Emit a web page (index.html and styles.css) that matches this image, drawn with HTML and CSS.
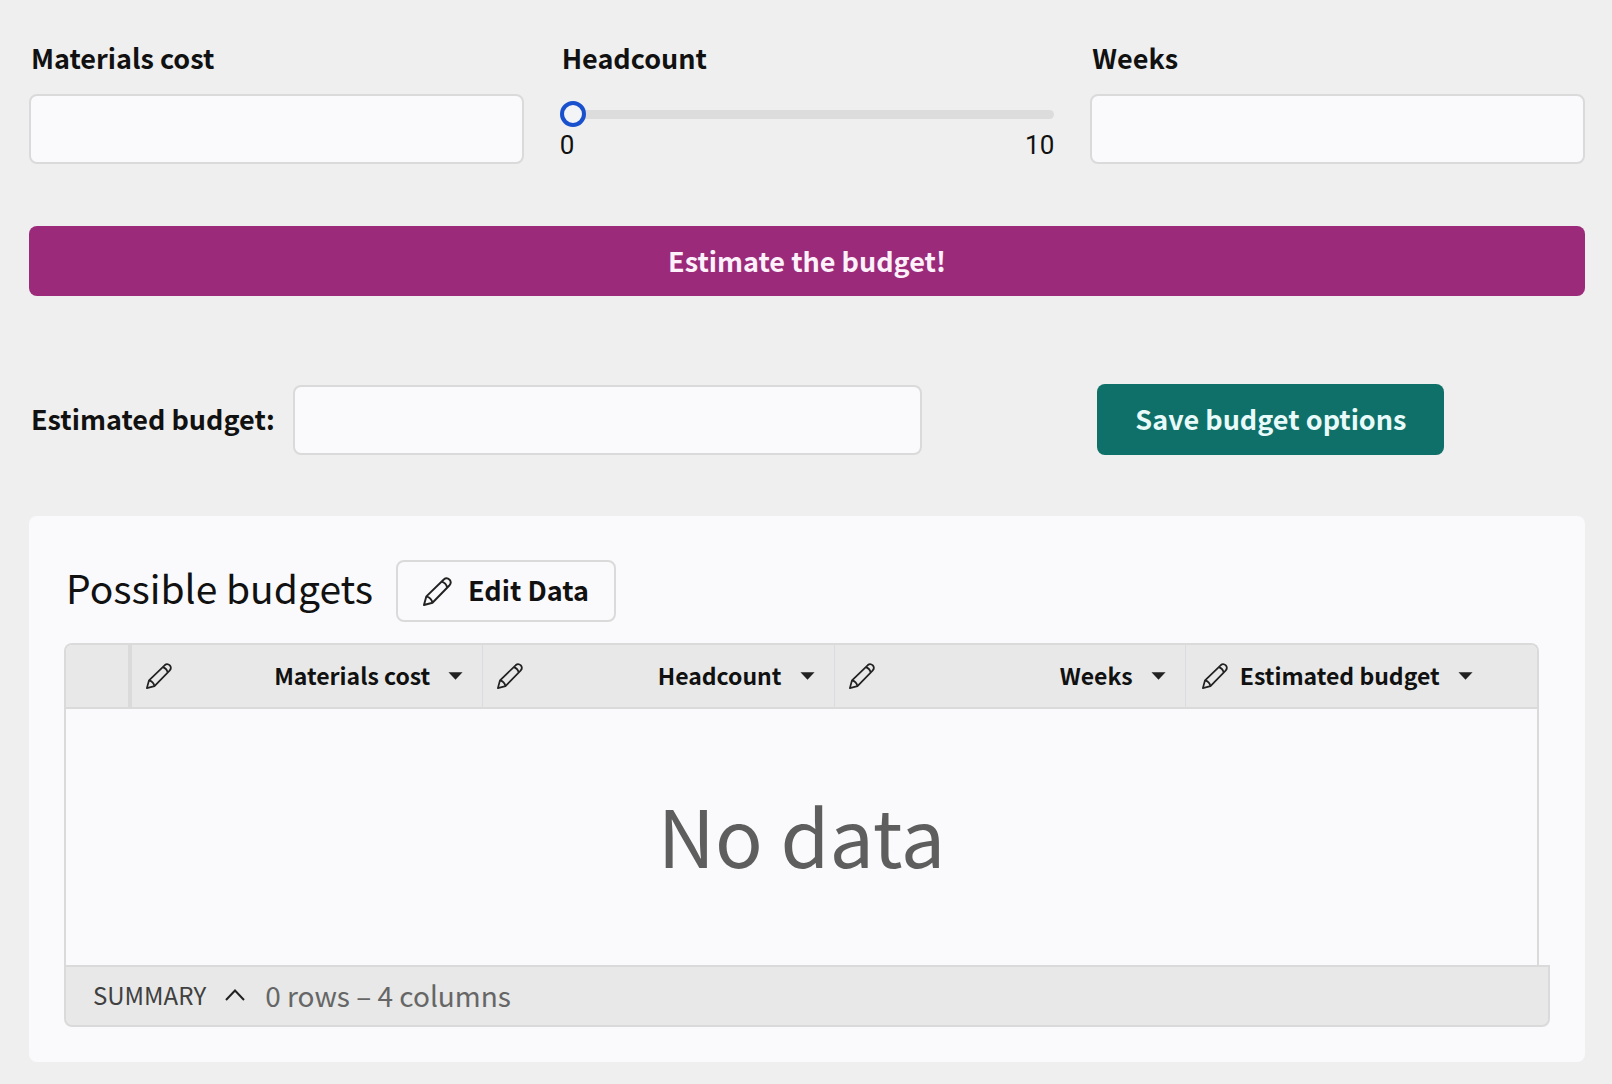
FILE: index.html
```
<!DOCTYPE html>
<html lang="en">

<head>
    <meta charset="UTF-8">
    <meta name="viewport" content="width=device-width, initial-scale=1.0">
    <title>Budget estimator</title>
    <link rel="stylesheet" href="styles.css">
</head>

<body>
    <!-- shared icons -->
    <svg class="sprite" aria-hidden="true">
        <symbol id="pencil" viewBox="0 0 30 30">
            <path d="M1 29 L3.5 20 L21.5 2.6 Q24.5 0 27.5 2.8 Q30 5.8 27.2 8.8 L9.8 26.6 Z M3.5 20 Q8.5 21.3 9.8 26.6 M19.2 4.8 Q23.8 6 25 11" />
        </symbol>
        <symbol id="caret" viewBox="0 0 16 8">
            <path d="M0.5 0 H15.5 L8 8 Z" />
        </symbol>
    </svg>

    <form class="inputs">
        <div class="field">
            <label for="materials">Materials cost</label>
            <input type="text" id="materials">
        </div>
        <div class="field">
            <label for="headcount">Headcount</label>
            <input type="range" id="headcount" min="0" max="10" value="0">
            <div class="scale">
                <span>0</span>
                <span>10</span>
            </div>
        </div>
        <div class="field">
            <label for="weeks">Weeks</label>
            <input type="text" id="weeks">
        </div>
        <button type="button" class="estimate">Estimate the budget!</button>
        <div class="result">
            <label for="estimated">Estimated budget:</label>
            <input type="text" id="estimated">
        </div>
        <button type="button" class="save">Save budget options</button>
    </form>

    <section class="card">
        <div class="cardHeader">
            <h2>Possible budgets</h2>
            <button type="button" class="edit">
                <svg class="pencil"><use href="#pencil" /></svg>
                <span>Edit Data</span>
            </button>
        </div>
        <div class="tableContainer">
            <table>
                <thead>
                    <tr>
                        <th class="rowNumber"></th>
                        <th>
                            <div class="column">
                                <svg class="pencil"><use href="#pencil" /></svg>
                                <span>Materials cost</span>
                                <button type="button" aria-label="Materials cost menu"><svg class="caret"><use href="#caret" /></svg></button>
                            </div>
                        </th>
                        <th>
                            <div class="column">
                                <svg class="pencil"><use href="#pencil" /></svg>
                                <span>Headcount</span>
                                <button type="button" aria-label="Headcount menu"><svg class="caret"><use href="#caret" /></svg></button>
                            </div>
                        </th>
                        <th>
                            <div class="column">
                                <svg class="pencil"><use href="#pencil" /></svg>
                                <span>Weeks</span>
                                <button type="button" aria-label="Weeks menu"><svg class="caret"><use href="#caret" /></svg></button>
                            </div>
                        </th>
                        <th>
                            <div class="column left">
                                <svg class="pencil"><use href="#pencil" /></svg>
                                <span>Estimated budget</span>
                                <button type="button" aria-label="Estimated budget menu"><svg class="caret"><use href="#caret" /></svg></button>
                            </div>
                        </th>
                    </tr>
                </thead>
                <tbody>
                    <tr>
                        <td colspan="5">No data</td>
                    </tr>
                </tbody>
            </table>
        </div>
        <div class="summary">
            <button type="button">
                SUMMARY
                <svg class="chevron" viewBox="0 0 20 12"><path d="M1 11 L10 1.5 L19 11" /></svg>
            </button>
            <span>0 rows – 4 columns</span>
        </div>
    </section>
</body>

</html>
```
FILE: styles.css
```
* {
    box-sizing: border-box;
}

body {
    margin: 0px;
    padding: 37px 27px 22px 29px;
    background-color: #eeefee;
    color: #111111;
    font-family: "Noto Sans CJK SC", "Noto Sans", sans-serif;
    font-size: 27px;
    line-height: 42px;
}

button {
    font: inherit;
    color: inherit;
    padding: 0px;
    border: none;
    background: none;
    cursor: pointer;
}

.sprite {
    display: none;
}

.pencil {
    width: 26px;
    height: 26px;
    fill: none;
    stroke: #222222;
    stroke-width: 2;
    stroke-linejoin: round;
    flex-shrink: 0;
}

.inputs {
    display: grid;
    grid-template-columns: repeat(3, 1fr);
    column-gap: 36px;
    font-weight: 700;

    label {
        padding-left: 2px;
    }

    input[type="text"] {
        width: 100%;
        height: 70px;
        padding: 0px 20px;
        border: 2px solid #dadada;
        border-radius: 8px;
        background-color: #fafafc;
        font: inherit;
    }

    .field {
        display: flex;
        flex-direction: column;

        input[type="text"] {
            margin-top: 15px;
        }
    }

    input[type="range"] {
        appearance: none;
        width: 100%;
        height: 26px;
        margin: 22px 0px 0px;
        background: none;
    }

    input[type="range"]::-webkit-slider-runnable-track {
        height: 9px;
        border-radius: 5px;
        background-color: #dcdcdc;
    }

    input[type="range"]::-webkit-slider-thumb {
        appearance: none;
        width: 26px;
        height: 26px;
        margin-top: -9px;
        border: 4px solid #1950cd;
        border-radius: 50%;
        background-color: #f3f4f5;
    }

    .scale {
        display: flex;
        justify-content: space-between;
        font-family: Roboto, sans-serif;
        font-size: 26px;
        font-weight: 400;
        line-height: 36px;
    }

    .estimate {
        grid-column: 1 / -1;
        height: 70px;
        margin-top: 62px;
        border-radius: 8px;
        background-color: #9c2a7a;
        color: #fdf2fb;
    }

    .result {
        grid-column: span 2;
        display: flex;
        align-items: center;
        gap: 18px;
        margin-top: 88px;
        padding-right: 132px;

        label {
            flex-shrink: 0;
            padding-bottom: 2px;
        }
    }

    .save {
        justify-self: start;
        height: 71px;
        margin-top: 88px;
        margin-left: 7px;
        padding: 0px 38px 2px;
        border-radius: 8px;
        background-color: #0f7069;
        color: #e9fafa;
    }
}

.card {
    margin-top: 61px;
    padding: 44px 35px 35px;
    border-radius: 8px;
    background-color: #fafafc;
}

.cardHeader {
    display: flex;
    align-items: center;
    gap: 23px;
    padding-left: 2px;

    h2 {
        margin: 0px;
        padding-bottom: 8px;
        font-size: 39px;
        font-weight: 400;
    }

    .edit {
        display: flex;
        align-items: center;
        gap: 16px;
        height: 62px;
        padding: 0px 25px;
        border: 2px solid #dadada;
        border-radius: 8px;
        font-weight: 700;

        span {
            padding-bottom: 2px;
        }
    }

    .pencil {
        width: 29px;
        height: 29px;
    }
}

.tableContainer {
    margin-top: 21px;
    margin-right: 11px;
    border: 2px solid #dadada;
    border-bottom: none;
    border-radius: 8px 8px 0px 0px;
    overflow: hidden;
}

table {
    width: 100%;
    border-collapse: separate;
    border-spacing: 0px;
    table-layout: fixed;

    th {
        height: 64px;
        padding: 0px;
        border-right: 1px solid #dcdce0;
        border-bottom: 2px solid #dadada;
        background-color: #e7e8e7;
        font-size: 23px;
        font-weight: 700;
    }

    th.rowNumber {
        width: 66px;
        border-right: 4px solid #dadada;
    }

    th:last-child {
        border-right: none;
    }

    td {
        height: 256px;
        padding: 0px 0px 6px;
        color: #5e5e5e;
        font-size: 79px;
        text-align: center;
    }
}

.column {
    display: flex;
    align-items: center;
    padding: 0px 19px 0px 14px;

    span {
        flex-grow: 1;
        padding-bottom: 2px;
        text-align: right;
    }

    button {
        display: flex;
        margin-left: 18px;
    }

    .caret {
        width: 15px;
        height: 8px;
        fill: #222222;
    }
}

.column.left {
    padding-left: 16px;

    span {
        flex-grow: 0;
        margin-left: 12px;
    }
}

.summary {
    display: flex;
    align-items: center;
    gap: 20px;
    height: 62px;
    padding: 0px 27px 2px;
    border: 2px solid #dadada;
    border-radius: 0px 0px 8px 8px;
    background-color: #e7e8e7;
    color: #666666;
    font-size: 28px;

    button {
        display: flex;
        align-items: center;
        gap: 19px;
        color: #404040;
        font-size: 24px;
    }

    .chevron {
        width: 20px;
        height: 12px;
        fill: none;
        stroke: #222222;
        stroke-width: 2;
    }
}
```
